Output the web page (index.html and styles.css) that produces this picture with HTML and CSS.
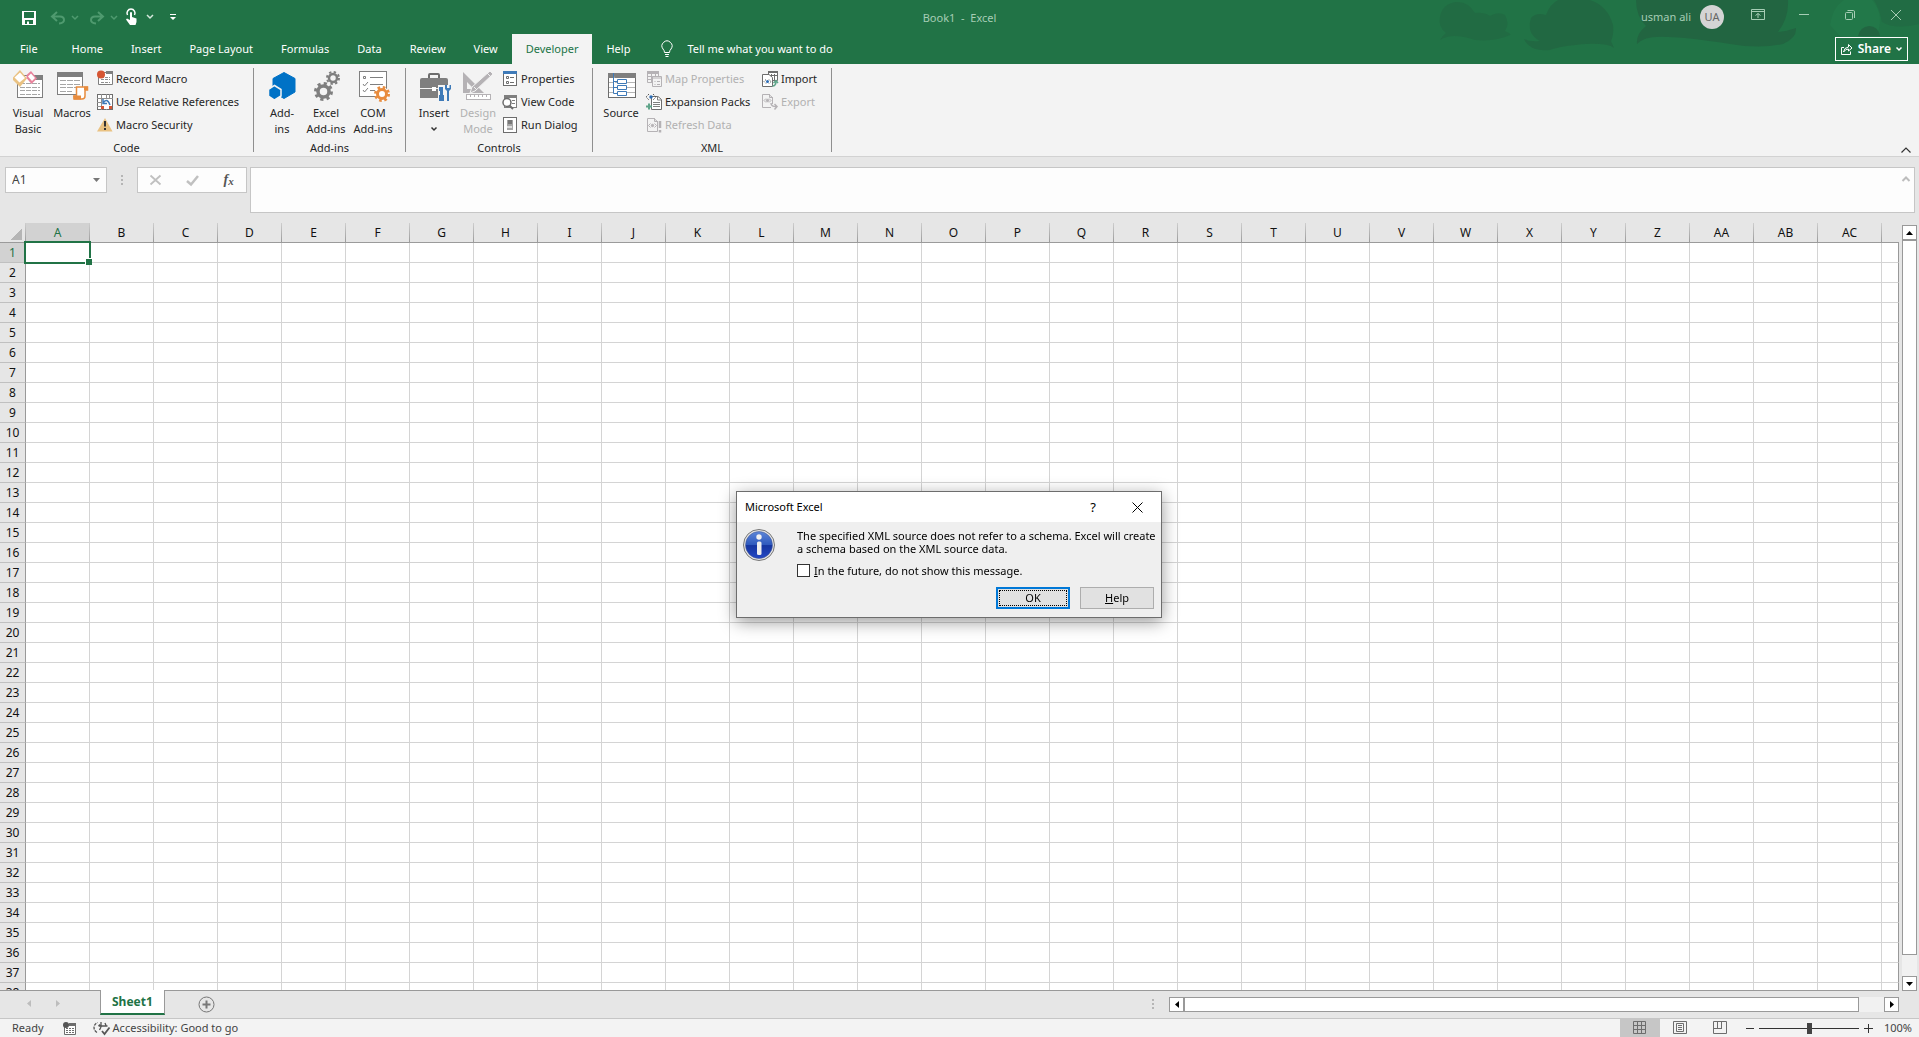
FILE: index.html
```
<!DOCTYPE html>
<html lang="en">
<head>
    <meta charset="UTF-8">
    <meta name="viewport" content="width=device-width, initial-scale=1.0">
    <title>Book1 - Excel</title>
    <link rel="stylesheet" href="styles.css">
</head>
<body>

    <header class="top">
        <svg class="clouds" width="519" height="64" viewBox="0 0 519 64">
            <path d="M40 40Q42 36 46 33Q38 27 40 17Q42 4 56 2Q68 1 75 13Q84 12 90 16Q98 11 105 15Q110 24 105 31Q112 34 110 35Q95 42 75 40Q52 32 40 40z" opacity=".6"/>
            <path d="M124 39Q130 42 140 41Q126 34 131 18Q136 12 146 15Q150 4 158 0H190Q208 6 213 25Q214 35 211 41L214 48Q208 43 185 44Q160 46 150 50Q130 52 124 39z" opacity=".8"/>
            <path d="M236 0H388Q389 18 378 32Q388 31 396 28Q397 38 383 44Q360 49 330 44Q285 37 268 37Q245 35 237 44Q236 34 246 26Q236 16 236 0z"/>
            <path class="light" d="M430 25Q432 8 444 0H472Q484 14 478 32Q460 40 440 36z"/>
            <path d="M458 36Q460 27 469 26Q478 26 480 36z"/>
            <path d="M474 0H519V24Q495 30 482 22Q480 10 474 0z" opacity=".5"/>
        </svg>

        <div class="title-bar">
            <div class="quick">
                <button class="q-save" aria-label="Save"><svg width="14" height="14" viewBox="0 0 14 14"><path d="M0 0H14V14H0zM2 1V7H12V1zM3 9V13H5V10.500H7V13H11V9z" fill="#fff" fill-rule="evenodd"/></svg></button>
                <button class="q-undo" aria-label="Undo"><svg width="27" height="14" viewBox="0 0 27 14"><path d="M6 1L1 5.500L6 10M1.500 5.500H9Q13 5.500 13 9Q13 12 8 12.500" fill="none" stroke="#4f9a6f" stroke-width="2"/><path d="M21 5L24 8L27 5" fill="none" stroke="#4f9a6f" stroke-width="1.500"/></svg></button>
                <button class="q-redo" aria-label="Redo"><svg width="27" height="14" viewBox="0 0 27 14"><path d="M8 1L13 5.500L8 10M12.500 5.500H5Q1 5.500 1 9Q1 12 6 12.500" fill="none" stroke="#4f9a6f" stroke-width="2"/><path d="M21 5L24 8L27 5" fill="none" stroke="#4f9a6f" stroke-width="1.500"/></svg></button>
                <button class="q-touch" aria-label="Touch mode"><svg width="28" height="17" viewBox="0 0 28 17"><path d="M1.500 6A4 4 0 1 1 8.500 6" fill="none" stroke="#fff" stroke-width="1.500"/><path d="M4 3.500Q5 2.500 6 3.500V8L10.500 9.500V13L9.500 16H4L0 10.500L1 9.500L4 11z" fill="#fff"/><path d="M21 6L24 9L27 6" fill="none" stroke="#d5e8dc" stroke-width="1.500"/></svg></button>
                <button class="q-more" aria-label="Customize toolbar"><svg width="6" height="7" viewBox="0 0 6 7"><path d="M0 0H6V1H0zM0 3H6L3 6z" fill="#fff"/></svg></button>
            </div>
            <div class="doc-title">Book1&nbsp; -&nbsp; Excel</div>
            <div class="account">
                <span>usman ali</span>
                <span class="avatar">UA</span>
                <div class="window-buttons">
                    <button aria-label="Ribbon display options"><svg width="14" height="12" viewBox="0 0 14 12"><path d="M.5 .5H13.500V10.500H.5zM.5 2.500H13.500M7 9V4.500M4.500 6.500L7 4.500L9.500 6.500"/></svg></button>
                    <button aria-label="Minimize"><svg width="10" height="10" viewBox="0 0 10 10"><path d="M0 4.500H10"/></svg></button>
                    <button aria-label="Restore"><svg width="11" height="11" viewBox="0 0 11 11"><rect x=".5" y="2.500" width="7" height="7" rx="1"/><path d="M2.500 .5H8.500Q9.500 .5 9.500 2V8"/></svg></button>
                    <button aria-label="Close"><svg width="10" height="10" viewBox="0 0 10 10"><path d="M0 0L10 10M10 0L0 10"/></svg></button>
                </div>
            </div>
        </div>

        <nav class="tabs">
            <a href="#" class="file">File</a>
            <a href="#">Home</a>
            <a href="#">Insert</a>
            <a href="#">Page Layout</a>
            <a href="#">Formulas</a>
            <a href="#">Data</a>
            <a href="#">Review</a>
            <a href="#">View</a>
            <a href="#" class="active">Developer</a>
            <a href="#">Help</a>
            <button class="tell">
                <svg width="12" height="16" viewBox="0 0 12 16"><path d="M3.500 11.500Q3.500 9.500 2 8A5 5 0 1 1 10 8Q8.500 9.500 8.500 11.500zM4 13.500H8M4.500 15.500H7.500" fill="none" stroke="#fff"/></svg>
                Tell me what you want to do
            </button>
            <button class="share">
                <svg width="12" height="12" viewBox="0 0 12 12"><path d="M3 4.500H.5V11.500H9.500V8.500M2.500 9Q3 4.500 7.500 4V1.500L11 5L7.500 8V6Q4.500 6 2.500 9z" fill="none" stroke="#fff"/></svg>
                Share
                <svg width="6" height="4" viewBox="0 0 6 4"><path d="M.5 .5L3 3L5.500 .5" fill="none" stroke="#fff" stroke-width="1.500"/></svg>
            </button>
        </nav>
    </header>

    <section class="ribbon">
        <div class="group code">
            <div class="tools">
                <button class="big">
                    <svg width="32" height="32" viewBox="0 0 32 32"><rect x="5.500" y="5.500" width="25" height="22" fill="#fff" stroke="#7f7f7f"/><path d="M23 5H31V10H23z" fill="#7f7f7f"/><path d="M8 13.500H28M8 17.500H28M8 20.500H28M8 24.500H28" stroke="#a6a6a6" stroke-dasharray="5 1"/><path d="M8 0L15 8.500L8 17L1 10V7.500z" fill="#eac282"/><path d="M8 2.500L13 8L7.500 12.500L2.500 7.500z" fill="#fff"/><path d="M19 1L25 8.500L19.500 14L14.500 8V5z" fill="#e8829b"/><path d="M19 3.500L23 8L20 11L16 6.500z" fill="#fff"/></svg>
                    Visual<br>Basic
                </button>
                <button class="big wide">
                    <svg width="32" height="32" viewBox="0 0 32 32"><rect x="1.500" y="2.500" width="25" height="22" fill="#fff" stroke="#7f7f7f"/><path d="M1 2H27V7H1z" fill="#7f7f7f"/><path d="M4 10.500H24M4 14.500H24M4 17.500H24M4 21.500H16" stroke="#a6a6a6" stroke-dasharray="6 1"/><path d="M20.500 17H31.500V20H29V26Q29 29 26 29H18V26H20.500z" fill="#fff" stroke="#e88c3e" stroke-width="1.500"/><path d="M17 25.500H25V29.500H18zM28 16.500H32V20H28z" fill="#e88c3e"/></svg>
                    Macros
                </button>
                <div class="small-col">
                    <button class="small"><svg width="16" height="16" viewBox="0 0 16 16"><path d="M1.500 1.500H15.500V13.500H1.500z" fill="#fff" stroke="#7f7f7f"/><path d="M9 0H16V3H9z" fill="#7f7f7f"/><path d="M4 6.500H13M4 8.500H13M4 11.500H13" stroke="#8f8f8f" stroke-dasharray="3 1"/><circle cx="4" cy="3.500" r="4" fill="#d65532"/></svg>Record Macro</button>
                    <button class="small"><svg width="16" height="16" viewBox="0 0 16 16"><rect x=".5" y=".5" width="15" height="15" fill="#fff" stroke="#6d6d6d"/><path d="M4.500 0V16M9.500 0V16M12.500 0V4M0 4.500H16M0 8.500H5M0 12.500H5" stroke="#8f8f8f"/><path d="M5 5H15V15H5z" fill="#fff"/><path d="M6 9Q10 3 13 11M6 5V9.500H10" fill="none" stroke="#3e7ab8" stroke-width="1.500"/><path d="M4 12H7V15H4zM12 12H15V15H12z" fill="#d65532"/></svg>Use Relative References</button>
                    <button class="small"><svg width="16" height="16" viewBox="0 0 16 16"><path d="M8 1L15.500 14.500H0z" fill="#eac282"/><path d="M7 4H9V9.500H7zM7 11H9V13H7z" fill="#333"/></svg>Macro Security</button>
                </div>
            </div>
            <div class="group-name">Code</div>
        </div>
        <div class="divider"></div>

        <div class="group addins">
            <div class="tools">
                <button class="big">
                    <svg width="32" height="32" viewBox="0 0 32 32"><path d="M18 2.500L29 8.500V22L18 28.500L7 22V8.500z" fill="#0072c6" stroke="#0072c6"/><path d="M8.500 15.500L15 19.500V26L8.500 30L2.500 26V19.500z" fill="#0072c6" stroke="#f3f3f3" stroke-width="1.500"/></svg>
                    Add-<br>ins
                </button>
                <button class="big wide">
                    <svg width="32" height="32" viewBox="0 0 32 32" fill="none" stroke="#7f7f7f"><circle cx="13.500" cy="21.500" r="5.500" stroke-width="3.500"/><circle cx="13.500" cy="21.500" r="8" stroke-width="3" stroke-dasharray="3.140 3.140"/><circle cx="23" cy="8" r="4" stroke-width="2.500"/><circle cx="23" cy="8" r="6" stroke-width="2" stroke-dasharray="2.360 2.350"/></svg>
                    Excel<br>Add-ins
                </button>
                <button class="big wide">
                    <svg width="32" height="32" viewBox="0 0 32 32"><rect x="2.500" y="1.500" width="27" height="25" fill="#fff" stroke="#7f7f7f"/><path d="M6.500 6.500H8.500V8.500H6.500zM6 14L7.500 16L11 12M6 20L7.500 22L11 18" fill="none" stroke="#7f7f7f"/><path d="M13 7.500H26M13 14.500H26M13 20.500H18" stroke="#7f7f7f"/><circle cx="25" cy="24" r="7" fill="#fff"/><circle cx="25" cy="24" r="4.500" fill="none" stroke="#e88c3e" stroke-width="3"/><circle cx="25" cy="24" r="6.500" fill="none" stroke="#e88c3e" stroke-width="3" stroke-dasharray="2.550 2.550"/></svg>
                    COM<br>Add-ins
                </button>
            </div>
            <div class="group-name">Add-ins</div>
        </div>
        <div class="divider"></div>

        <div class="group controls">
            <div class="tools">
                <button class="big">
                    <svg width="34" height="32" viewBox="0 0 34 32"><path d="M12 8V5Q12 4 13 4H21Q22 4 22 5V8" fill="none" stroke="#6d6d6d" stroke-width="2"/><path d="M5 8H29Q31 8 31 10V28H3V10Q3 8 5 8z" fill="#7f7f7f"/><path d="M3 18.500H31" stroke="#f3f3f3"/><path d="M15 17H19V21H15z" fill="#fff"/><path d="M21 15H34V32H21z" fill="#f3f3f3"/><path d="M22 17H26V25H27V31H22V25H23V21H22zM28 15V19L30 21V31H32V21L34 19V15H32.500V18H30V15z" fill="#3e7ab8"/></svg>
                    Insert
                    <svg class="chev" width="6" height="4" viewBox="0 0 6 4"><path d="M.5 .5L3 3L5.500 .5" fill="none" stroke="#333" stroke-width="1.500"/></svg>
                </button>
                <button class="big wide" disabled>
                    <svg width="32" height="32" viewBox="0 0 32 32"><path d="M1 2L22 23H1zM5 12V19H12z" fill="#b5b2b5" fill-rule="evenodd"/><path d="M8 23L10 17L28 1L31 4L13 21z" fill="#b5b2b5" stroke="#f3f3f3"/><path d="M25 3L29 7M12 17L15 20" stroke="#f3f3f3"/><rect x="4.500" y="24.500" width="24" height="5" fill="#fff" stroke="#b5b2b5"/><path d="M8.500 25V27M12.500 25V27M16.500 25V27M20.500 25V27M24.500 25V27" stroke="#b5b2b5"/></svg>
                    Design<br>Mode
                </button>
                <div class="small-col">
                    <button class="small"><svg width="16" height="16" viewBox="0 0 16 16"><rect x="1.500" y=".5" width="13" height="14" fill="#fff" stroke="#6d6d6d"/><path d="M1 0H15V3H1z" fill="#3e7ab8"/><path d="M4.500 5.500H6.500V7.500H4.500zM4.500 10.500H6.500V12.500H4.500z" fill="none" stroke="#6d6d6d"/><path d="M8 6.500H12M8 11.500H12" stroke="#6d6d6d"/></svg>Properties</button>
                    <button class="small"><svg width="16" height="16" viewBox="0 0 16 16"><rect x="2.500" y="1.500" width="12" height="12" fill="#fff" stroke="#7f7f7f"/><path d="M2 1H15V4H2z" fill="#7f7f7f"/><path d="M10 6.500H13M10 9.500H13" stroke="#7f7f7f"/><circle cx="5" cy="8.500" r="4" fill="#fff" stroke="#6d6d6d" stroke-width="1.500"/><path d="M7.500 11.500L11 15" stroke="#6d6d6d" stroke-width="2"/></svg>View Code</button>
                    <button class="small"><svg width="16" height="16" viewBox="0 0 16 16"><rect x="1.500" y=".5" width="13" height="15" fill="#fff" stroke="#6d6d6d"/><path d="M5 3H11V13H5z" fill="#a6a6a6"/><path d="M6 3H10V7H6z" fill="#777"/><path d="M5 9H10V11H5z" fill="#ddd"/></svg>Run Dialog</button>
                </div>
            </div>
            <div class="group-name">Controls</div>
        </div>
        <div class="divider"></div>

        <div class="group xml">
            <div class="tools">
                <button class="big">
                    <svg width="32" height="32" viewBox="0 0 32 32"><rect x="3.500" y="3.500" width="27" height="24" fill="#fff" stroke="#6d6d6d"/><path d="M3 3H31V8H3z" fill="#7f7f7f"/><path d="M4 12.500H30M4 17.500H30M4 22.500H30" stroke="#b5b5b5"/><path d="M8.500 3V23.500H12M8.500 11.500H12M8.500 17.500H12M12.500 9.500H21.500V13.500H12.500zM12.500 15.500H21.500V19.500H12.500zM12.500 21.500H21.500V25.500H12.500z" fill="#fff" stroke="#3e7ab8"/></svg>
                    Source
                </button>
                <div class="small-col">
                    <button class="small" disabled><svg width="16" height="16" viewBox="0 0 16 16" fill="#f3f3f3" stroke="#b5b2b5"><path d="M1.500 1.500H12.500V11.500H1.500zM1 5.500H12M1 8.500H7M5.500 3V11M9.500 3V6"/><path d="M1 1.500H13" stroke-width="3"/><path d="M6.500 5.500H15.500V15.500H6.500zM6 7H16M8.500 10.500H9.500M11 10.500H14M8.500 13.500H9.500M11 13.500H14"/></svg>Map Properties</button>
                    <button class="small"><svg width="16" height="16" viewBox="0 0 16 16"><path d="M5.500 2.500H12L15.500 5.500V15.500H5.500z" fill="#fff" stroke="#6d6d6d"/><path d="M11.500 2V6H15M7 8.500H14M7 10.500H14M7 12.500H14" fill="none" stroke="#7f7f7f"/><path d="M3 0L0 3L3 6M7 0L10 3L7 6" fill="none" stroke="#555" stroke-dasharray="1.500 1"/><circle cx="5" cy="3" r="1.700" fill="#2b6cb5"/><path d="M0 12.500H6M3 9.500V15.500" stroke="#5fa58a" stroke-width="2"/></svg>Expansion Packs</button>
                    <button class="small" disabled><svg width="16" height="16" viewBox="0 0 16 16" fill="none" stroke="#b5b2b5"><path d="M1.500 1.500H8L11.500 4.500V14.500H1.500zM8.500 1V4.500H12M4.500 6.500L2.500 8.500L4.500 10.500M8.500 6.500L10.500 8.500L8.500 10.500"/><circle cx="6.500" cy="8.500" r="1.200" fill="#b5b2b5"/><path d="M14 4V11M14 13V15.500" stroke-width="2.500"/></svg>Refresh Data</button>
                </div>
                <div class="small-col last">
                    <button class="small"><svg width="16" height="16" viewBox="0 0 16 16"><path d="M6.500 .5H15.500V9.500H6.500zM6 4.500H16M9.500 3V9M12.500 3V9" fill="#fff" stroke="#6d6d6d"/><path d="M6 1H16" stroke="#6d6d6d" stroke-width="2"/><path d="M.5 3.500H7L10.500 6.500V15.500H.5z" fill="#fff" stroke="#6d6d6d"/><path d="M4 8.500L2 10.500L4 12.500M7 8.500L9 10.500L7 12.500" fill="none" stroke="#555" stroke-dasharray="1.500 1"/><circle cx="5.500" cy="10.500" r="1.500" fill="#2b6cb5"/><path d="M10.500 15Q14 15 14 10M11.500 12L14 9.500L16 12" fill="none" stroke="#5fa58a" stroke-width="1.500"/></svg>Import</button>
                    <button class="small" disabled><svg width="16" height="16" viewBox="0 0 16 16" fill="none" stroke="#b5b2b5"><path d="M9 13.500H.5V.5H7L10.500 3.500V10M7.500 0V3.500H11M4 4.500L2 6.500L4 8.500M7 4.500L9 6.500L7 8.500"/><circle cx="5.500" cy="6.500" r="1.200" fill="#b5b2b5"/><path d="M9 9Q9 13 15 12.500M12.500 10L15 12.500L12.500 15.500" stroke-width="1.500"/></svg>Export</button>
                </div>
            </div>
            <div class="group-name">XML</div>
        </div>
        <div class="divider"></div>
        <button class="collapse" aria-label="Collapse ribbon"><svg width="10" height="6" viewBox="0 0 10 6"><path d="M.5 5.500L5 1L9.500 5.500" fill="none" stroke="#333" stroke-width="1.200"/></svg></button>
    </section>

    <section class="formula-bar">
        <div class="name-box">
            <input type="text" value="A1" aria-label="Name box">
            <svg width="7" height="4" viewBox="0 0 7 4"><path d="M0 0H7L3.500 4z" fill="#777"/></svg>
        </div>
        <div class="grip"></div>
        <div class="fx-box">
            <button aria-label="Cancel"><svg width="11" height="10" viewBox="0 0 11 10"><path d="M.5 .5L10.500 9.500M10.500 .5L.5 9.500" stroke="#c0c0c0" stroke-width="1.800"/></svg></button>
            <button aria-label="Enter"><svg width="13" height="11" viewBox="0 0 13 11"><path d="M1 6L5 9.500L12 1" fill="none" stroke="#c0c0c0" stroke-width="2.500"/></svg></button>
            <button class="fx" aria-label="Insert function">f<sub>x</sub></button>
        </div>
        <div class="formula">
            <textarea aria-label="Formula"></textarea>
            <svg width="8" height="6" viewBox="0 0 8 6"><path d="M.5 5L4 1.500L7.500 5" fill="none" stroke="#bdbdbd" stroke-width="2"/></svg>
        </div>
    </section>

    <main class="sheet-area">
        <div class="sheet">
            <table id="grid"></table>
        </div>
        <div class="v-scroll">
            <button aria-label="Scroll up"><svg width="7" height="4" viewBox="0 0 7 4"><path d="M0 4H7L3.500 0z"/></svg></button>
            <div class="track"><div class="thumb"></div></div>
            <button aria-label="Scroll down"><svg width="7" height="4" viewBox="0 0 7 4"><path d="M0 0H7L3.500 4z"/></svg></button>
        </div>
    </main>

    <section class="sheet-bar">
        <div class="sheet-nav">
            <svg width="4" height="7" viewBox="0 0 4 7"><path d="M4 0V7L0 3.500z" fill="#bdbdbd"/></svg>
            <svg width="4" height="7" viewBox="0 0 4 7"><path d="M0 0V7L4 3.500z" fill="#bdbdbd"/></svg>
        </div>
        <button class="sheet-tab">Sheet1</button>
        <button class="add-sheet" aria-label="New sheet"><svg width="17" height="17" viewBox="0 0 17 17"><circle cx="8.500" cy="8.500" r="7.500" fill="none" stroke="#777"/><path d="M4.500 8.500H12.500M8.500 4.500V12.500" stroke="#777" stroke-width="2"/></svg></button>
        <div class="grip"></div>
        <div class="h-scroll">
            <button aria-label="Scroll left"><svg width="4" height="7" viewBox="0 0 4 7"><path d="M4 0V7L0 3.500z"/></svg></button>
            <div class="track"><div class="thumb"></div></div>
            <button aria-label="Scroll right"><svg width="4" height="7" viewBox="0 0 4 7"><path d="M0 0V7L4 3.500z"/></svg></button>
        </div>
    </section>

    <footer class="status">
        <span class="ready">Ready</span>
        <svg class="rec" width="14" height="13" viewBox="0 0 14 13"><path d="M1.500 2.500H12.500V12.500H1.500z" fill="#fff" stroke="#6d6d6d"/><path d="M6 1H13V4H6z" fill="#6d6d6d"/><path d="M3 6.500H12M3 8.500H12M3 10.500H12" stroke="#6d6d6d" stroke-dasharray="2 1"/><circle cx="3" cy="3" r="3" fill="#555"/></svg>
        <svg width="16" height="14" viewBox="0 0 16 14" fill="none" stroke="#555" stroke-width="1.300"><path d="M3 11.500A5.500 5.500 0 0 1 3.500 1.500" stroke-dasharray="3 1"/><path d="M7 1V6M4.500 5H13.500M4.500 5L6 3.500M11 2L12 4.500M7 6L5.500 9"/><path d="M8 10L10.500 13L15.500 6.500" stroke-width="1.800"/></svg>
        <span class="access">Accessibility: Good to go</span>
        <div class="views">
            <button class="on" aria-label="Normal"><svg width="14" height="14" viewBox="0 0 14 14"><path d="M.5 .5H12.500V12.500H.5zM4.500 0V13M8.500 0V13M0 4.500H13M0 8.500H13"/></svg></button>
            <button aria-label="Page layout"><svg width="14" height="14" viewBox="0 0 14 14"><path d="M.5 .5H13.500V12.500H.5zM3.500 2.500H10.500V10.500H3.500zM5 4.500H9M5 6.500H9M5 8.500H9"/></svg></button>
            <button aria-label="Page break"><svg width="14" height="14" viewBox="0 0 14 14"><path d="M.5 .5H13.500V12.500H.5zM4.500 0V7.500M8.500 0V7.500M0 7.500H9"/></svg></button>
        </div>
        <div class="zoom">
            <button aria-label="Zoom out"><svg width="8" height="9" viewBox="0 0 8 9"><path d="M0 4.500H8"/></svg></button>
            <input type="range" min="0" max="100" value="50" aria-label="Zoom">
            <button aria-label="Zoom in"><svg width="9" height="9" viewBox="0 0 9 9"><path d="M0 4.500H9M4.500 0V9"/></svg></button>
            <span class="percent">100%</span>
        </div>
    </footer>

    <div class="dialog" role="dialog" aria-labelledby="dialog-title">
        <div class="dialog-title">
            <span id="dialog-title">Microsoft Excel</span>
            <button class="what" aria-label="What's this">?</button>
            <button aria-label="Close"><svg width="11" height="11" viewBox="0 0 11 11"><path d="M.5 .5L10.500 10.500M10.500 .5L.5 10.500" stroke="#000"/></svg></button>
        </div>
        <div class="dialog-body">
            <svg width="32" height="32" viewBox="0 0 32 32">
                <defs>
                    <linearGradient id="ball" x1="0" y1="0" x2="0" y2="1"><stop offset="0" stop-color="#5d86d8"/><stop offset=".5" stop-color="#2d58bd"/><stop offset=".52" stop-color="#1535a0"/><stop offset="1" stop-color="#2448c4"/></linearGradient>
                </defs>
                <circle cx="16" cy="16" r="15.500" fill="#e4e4e4" stroke="#777"/>
                <circle cx="16" cy="16" r="13.500" fill="url(#ball)" stroke="#43548e" stroke-width=".5"/>
                <circle cx="16" cy="8" r="2.700" fill="#f2f2f2"/>
                <rect x="14" y="12.500" width="4.500" height="13.500" rx="1.500" fill="#eee"/>
            </svg>
            <div class="message">
                <p>The specified XML source does not refer to a schema. Excel will create<br>a schema based on the XML source data.</p>
                <label><input type="checkbox"><span><u>I</u>n the future, do not show this message.</span></label>
            </div>
        </div>
        <div class="dialog-buttons">
            <button class="ok">OK</button>
            <button><u>H</u>elp</button>
        </div>
    </div>

    <script>
        const cols = [];
        for (let i = 0; i < 30; i++) {
            const letter = String.fromCharCode(65 + i % 26);
            cols.push(i < 26 ? letter : 'A' + letter);
        }

        // The last column is cut off by the window, so it has no letter
        let html = '<thead><tr><th class="corner"></th>';
        cols.forEach((name, i) => {
            html += `<th${i === 0 ? ' class="current"' : ''}>${i < 29 ? name : ''}</th>`;
        });
        html += '</tr></thead><tbody>';

        for (let row = 1; row <= 38; row++) {
            html += `<tr><th${row === 1 ? ' class="current"' : ''}>${row}</th>`;
            cols.forEach((name, i) => {
                html += row === 1 && i === 0 ? '<td class="selected"></td>' : '<td></td>';
            });
            html += '</tr>';
        }

        document.getElementById('grid').innerHTML = html + '</tbody>';
    </script>

</body>
</html>
```
FILE: styles.css
```
* {
    box-sizing: border-box;
}

body {
    margin: 0;
    height: 100vh;
    overflow: hidden;
    display: flex;
    flex-direction: column;
    background: #e6e6e6;
    color: #262626;
    font: 11px/16px "Noto Sans", "Open Sans", sans-serif;
}

button {
    padding: 0;
    border: none;
    background: none;
    color: inherit;
    font: inherit;
}

svg {
    display: block;
    flex: none;
    overflow: visible;
}

/* Green header */
.top {
    position: relative;
    background: #217346;
    color: #fff;
}

.clouds {
    position: absolute;
    top: 0;
    right: 0;
    fill: #226541;
}

.clouds .light {
    fill: #237b4b;
    opacity: .6;
}

.title-bar {
    position: relative;
    height: 34px;
    display: grid;
    grid-template-columns: 1fr auto 1fr;
}

.quick {
    display: flex;
    align-items: center;
    gap: 12px;
    padding-left: 22px;
}

.q-save { width: 17px; }
.q-undo { width: 27px; }
.q-redo { width: 24px; }
.q-touch { width: 32px; }

.doc-title {
    line-height: 35px;
    color: #a6cdb5;
}

.account {
    display: flex;
    justify-content: flex-end;
    line-height: 34px;
    color: #a6cdb5;
}

.avatar {
    width: 24px;
    height: 24px;
    margin: 5px 11px 0 9px;
    border-radius: 50%;
    background: #d4d4d4;
    color: #666;
    line-height: 24px;
    text-align: center;
}

.window-buttons {
    display: flex;
    height: 30px;
}

.window-buttons button {
    width: 46px;
    display: flex;
    align-items: center;
    justify-content: center;
}

.window-buttons svg {
    fill: none;
    stroke: #a6cdb5;
}

.tabs {
    position: relative;
    display: flex;
    height: 30px;
    line-height: 30px;
}

.tabs a {
    padding: 0 14px;
    color: #fff;
    text-decoration: none;
}

.tabs .file { padding: 0 20px; }

.tabs .active {
    background: #f3f3f3;
    color: #217346;
}

.tell {
    display: flex;
    align-items: center;
    gap: 14px;
    margin-left: 17px;
}

.share {
    display: flex;
    align-items: center;
    gap: 5px;
    height: 24px;
    margin: 3px 11px 0 auto;
    padding: 0 5px;
    border: 1px solid #fff;
    font-size: 12px;
    font-weight: 600;
}

/* Ribbon */
.ribbon {
    display: flex;
    height: 93px;
    padding-top: 4px;
    background: #f3f3f3;
    border-bottom: 1px solid #d2d2d2;
}

.divider {
    width: 1px;
    height: 84px;
    background: #8f8f8f;
}

.code { width: 253px; }
.addins { width: 151px; }
.controls { width: 186px; }
.xml { width: 238px; }

.tools {
    display: flex;
    gap: 1px;
    height: 72px;
    padding-left: 8px;
}

.big {
    width: 40px;
    display: flex;
    flex-direction: column;
    align-items: center;
    padding-top: 2px;
}

.wide { width: 46px; }

.big > svg:first-child { margin-bottom: 3px; }
.chev { margin-top: 6px; }

.small-col {
    display: flex;
    flex-direction: column;
    align-items: flex-start;
    margin-top: -1px;
}

.code .small-col { margin-left: 1px; }
.xml .small-col { margin-left: 4px; }
.xml .last { margin-left: auto; padding-right: 14px; }

.small {
    height: 23px;
    display: flex;
    align-items: center;
    gap: 3px;
    white-space: nowrap;
}

button:disabled { color: #b1b1b1; }

.group-name { text-align: center; }

.collapse {
    margin: auto 8px 3px auto;
}

/* Formula bar */
.formula-bar {
    display: flex;
    align-items: flex-start;
    padding: 10px 4px 10px 5px;
}

.name-box,
.fx-box,
.formula {
    display: flex;
    height: 26px;
    background: #fdfdfd;
    border: 1px solid #c6c6c6;
}

.name-box {
    width: 102px;
    align-items: center;
    padding: 0 6px;
}

.name-box input {
    flex: 1;
    min-width: 0;
    padding: 0;
    border: none;
    background: none;
    color: #444;
    font: inherit;
    font-size: 12px;
}

.grip {
    width: 2px;
    height: 10px;
    background: repeating-linear-gradient(#b5b5b5 0 2px, transparent 2px 4px);
}

.formula-bar .grip { margin: 8px 14px; }

.fx-box {
    width: 110px;
    align-items: center;
    justify-content: space-around;
}

.fx {
    color: #555;
    font: italic bold 14px/20px "Liberation Serif", serif;
}

.fx sub {
    font-size: 11px;
    line-height: 0;
    vertical-align: -1px;
}

.formula {
    flex: 1;
    height: 46px;
    margin-left: 3px;
    padding: 8px 4px;
}

.formula textarea {
    flex: 1;
    padding: 0;
    border: none;
    background: none;
    resize: none;
    font: inherit;
}

/* Sheet */
.sheet-area {
    flex: 1;
    min-height: 0;
    display: flex;
}

.sheet {
    flex: 1;
    overflow: hidden;
    border-bottom: 1px solid #999;
}

#grid {
    width: 100%;
    table-layout: fixed;
    border-collapse: separate;
    border-spacing: 0;
    font-size: 12px;
    line-height: 19px;
}

#grid th,
#grid td {
    height: 20px;
    padding: 0;
    border-right: 1px solid #d4d4d4;
    border-bottom: 1px solid #d4d4d4;
    font-weight: normal;
    color: #111;
}

#grid td {
    background: #fff;
}

#grid td:last-child { border-right-color: #999; }

#grid th {
    background: #e6e6e6;
}

#grid thead th {
    width: 64px;
    border-bottom-color: #999;
    border-right: 1px solid;
    border-image: linear-gradient(#d0d0d0, #999) 1;
    border-top: none;
    border-left: none;
}

#grid thead th:last-child {
    width: auto;
    border-right: none;
}

#grid thead .corner {
    width: 26px;
    background: linear-gradient(135deg, transparent 50%, #b5b5b5 50%) 10px 5px / 12px 12px no-repeat;
}

#grid tbody th {
    border-right-color: #999;
    border-bottom-color: #c0c0c0;
}

#grid .current {
    background: #d2d2d2;
    color: #217346;
}

.selected { position: relative; }

/* Selection frame and its fill handle */
.selected::before {
    content: "";
    position: absolute;
    inset: -2px;
    border: 2px solid #217346;
}

.selected::after {
    content: "";
    position: absolute;
    right: -3px;
    bottom: -3px;
    width: 6px;
    height: 6px;
    background: #217346;
    border-top: 1px solid #fff;
    border-left: 1px solid #fff;
}

/* Scrollbars */
.v-scroll {
    width: 20px;
    padding: 2px 2px 0 3px;
    display: flex;
    flex-direction: column;
}

.v-scroll button,
.h-scroll button {
    width: 15px;
    height: 15px;
    display: flex;
    align-items: center;
    justify-content: center;
    background: #fff;
    border: 1px solid #999;
}

.track {
    flex: 1;
    background: #f1f1f1;
}

.thumb {
    height: 100%;
    background: #fff;
    border: 1px solid #999;
}

.v-scroll .track { padding-bottom: 21px; }
.h-scroll .track { padding-right: 25px; }

/* Sheet tabs */
.sheet-bar {
    height: 28px;
    display: flex;
    border-bottom: 1px solid #c6c6c6;
}

.sheet-nav {
    width: 100px;
    display: flex;
    gap: 25px;
    padding: 9px 0 0 27px;
}

.sheet-tab {
    position: relative;
    height: 25px;
    margin-top: -1px;
    padding: 0 11px;
    background: #fff;
    border: solid #999;
    border-width: 0 1px;
    border-bottom: 2px solid #217346;
    color: #217346;
    font-size: 12px;
    font-weight: 700;
}

.add-sheet {
    height: 26px;
    margin-left: 33px;
}

.sheet-bar .grip { margin: 8px 15px 0 auto; }

.h-scroll {
    width: 730px;
    height: 15px;
    margin: 6px 20px 0 0;
    display: flex;
}

/* Status bar */
.status {
    height: 18px;
    display: flex;
    align-items: center;
    padding-right: 7px;
    background: #f3f3f3;
    color: #444;
}

.ready { margin-left: 12px; }
.rec { margin: 0 17px 0 19px; }
.access { margin-left: 3px; }

.views {
    display: flex;
    margin-left: auto;
}

.views button {
    width: 40px;
    height: 18px;
    display: flex;
    align-items: center;
    justify-content: center;
}

.views .on { background: #c6c6c6; }

.views svg {
    fill: none;
    stroke: #6d6d6d;
}

.zoom {
    display: flex;
    align-items: center;
    gap: 5px;
    padding-left: 6px;
}

.zoom svg { stroke: #333; }

.zoom input {
    appearance: none;
    width: 100px;
    height: 11px;
    margin: 0;
    background: linear-gradient(#333, #333) 0 5px / 100% 1px no-repeat;
}

.zoom input::-webkit-slider-thumb {
    appearance: none;
    width: 5px;
    height: 11px;
    background: #444;
}

.percent {
    width: 34px;
    text-align: right;
}

/* Message box */
.dialog {
    position: fixed;
    left: 736px;
    top: 491px;
    width: 426px;
    background: #efefef;
    border: 1px solid #6d6d6d;
    box-shadow: 0 4px 16px rgba(0, 0, 0, .4);
    color: #000;
}

.dialog-title {
    height: 30px;
    display: flex;
    align-items: center;
    padding: 0 18px 0 8px;
    background: #fff;
}

.dialog-title .what {
    margin: 0 36px 0 auto;
    font-size: 13px;
}

.dialog-body {
    display: flex;
    gap: 22px;
    padding: 7px 6px 0;
    line-height: 13px;
}

.message p {
    margin: 0;
    white-space: nowrap;
}

.message label {
    display: flex;
    align-items: center;
    gap: 4px;
    margin-top: 9px;
}

.message input {
    appearance: none;
    width: 13px;
    height: 13px;
    margin: 0;
    background: #fff;
    border: 1px solid #333;
}

.dialog-buttons {
    display: flex;
    justify-content: flex-end;
    gap: 10px;
    padding: 10px 7px 8px;
}

.dialog-buttons button {
    width: 74px;
    height: 22px;
    background: #e1e1e1;
    border: 1px solid #adadad;
}

.dialog-buttons .ok {
    border: 2px solid #0078d7;
    outline: 1px dotted #000;
    outline-offset: -4px;
}
```
